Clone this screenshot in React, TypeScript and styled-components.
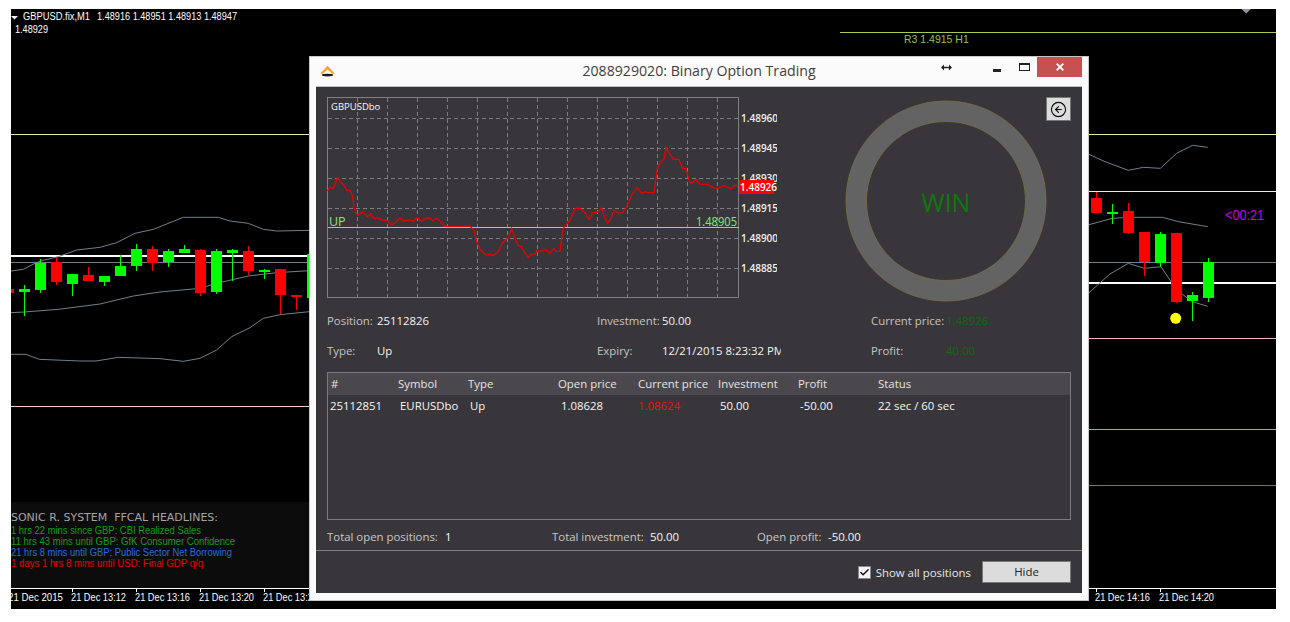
import React from "react";
import styled, { createGlobalStyle } from "styled-components";
import { CircleArrowLeft, Check } from "lucide-react";

const Global = createGlobalStyle`
  html, body { margin: 0; padding: 0; background: #fff; }
  * { box-sizing: border-box; }
`;

const UI = `"Open Sans", "Noto Sans", "Liberation Sans", sans-serif`;
const MT = `"Liberation Sans", Arial, sans-serif`;

const Stage = styled.div`
  position: relative;
  width: 1265px;
  height: 600px;
  margin: 9px 0 0 11px;
  background: #000;
  overflow: hidden;
`;
const Backdrop = styled.svg`
  display: block;
  font-family: ${MT};
`;
const Win = styled.section`
  position: absolute;
  left: 298px;
  top: 47px;
  width: 780px;
  height: 545px;
  display: flex;
  flex-direction: column;
  padding: 0 6px 7px;
  background: #fbfbfb;
  border: 1px solid #c6c6c6;
  font-family: ${UI};
`;
const TitleBar = styled.header`
  flex: none;
  height: 29px;
  display: grid;
  grid-template-columns: 1fr auto 1fr;
`;
const AppIcon = styled.svg`
  margin: 7px 0 0 3px;
`;
const Title = styled.h1`
  margin: 0;
  font-size: 14.15px;
  font-weight: 400;
  line-height: 27px;
  color: #3e3e3e;
  white-space: nowrap;
`;
const Controls = styled.div`
  display: flex;
  justify-content: flex-end;
  align-items: flex-start;
`;
const ResizeGlyph = styled.svg`
  margin: 7px 41px 0 0;
`;
const MinGlyph = styled.span`
  width: 8px;
  height: 3px;
  margin: 12px 18px 0 0;
  background: #222;
`;
const MaxGlyph = styled.span`
  width: 11px;
  height: 8px;
  margin: 6px 7px 0 0;
  border: 1px solid #222;
  border-top-width: 2px;
`;
const CloseButton = styled.div`
  width: 45px;
  height: 20px;
  display: flex;
  align-items: center;
  justify-content: center;
  background: #c75050;
`;
const Body = styled.div`
  flex: 1;
  display: flex;
  flex-direction: column;
  background: #38363a;
  border-top: 1px solid #c0c0c0;
`;
const Main = styled.div`
  flex: 1;
  padding: 10px 11px 0;
  display: flex;
  flex-direction: column;
`;
const TopArea = styled.div`
  position: relative;
  flex: none;
  height: 208px;
  display: flex;
`;
const PriceChart = styled.svg`
  display: block;
  flex: none;
  font-family: ${UI};
`;
const Ring = styled.svg`
  flex: none;
  margin: 3px 0 0 68px;
  font-family: ${UI};
`;
const BackButton = styled.button`
  position: absolute;
  top: 0;
  right: 0;
  width: 25px;
  height: 24px;
  padding: 0;
  display: flex;
  align-items: center;
  justify-content: center;
  background: #dcdcdc;
  border: 1px solid #777;
  color: #0a0a14;
`;
const InfoGrid = styled.div`
  flex: none;
  display: grid;
  grid-template-columns: 270px 274px 1fr;
  grid-auto-rows: 30px;
`;
const InfoCell = styled.div`
  display: flex;
  align-items: center;
  font-size: 11.4px;
  white-space: nowrap;
`;
const InfoLabel = styled.span<{ $w: number }>`
  flex: none;
  width: ${(p) => p.$w}px;
  color: #c4c4c4;
`;
const InfoValue = styled.span<{ $c?: string; $clip?: number }>`
  color: ${(p) => p.$c || "#f4f4f4"};
  ${(p) => (p.$clip ? `width:${p.$clip}px;overflow:hidden;` : "")}
`;
const Table = styled.div`
  flex: none;
  height: 148px;
  margin-top: 7px;
  border: 1px solid #7c7c7c;
  font-size: 11.4px;
`;
const HeadRow = styled.div`
  height: 22px;
  display: grid;
  grid-template-columns: 67px 70px 90px 80px 80px 80px 80px 1fr;
  align-items: center;
  padding: 0 0 2px 3px;
  background: #4a484c;
  color: #e4e4e4;
  white-space: nowrap;
`;
const DataRow = styled(HeadRow)`
  background: none;
  color: #f6f6f6;
`;
const Cell = styled.span<{ $dx?: number; $c?: string }>`
  margin-left: ${(p) => p.$dx || 0}px;
  ${(p) => (p.$c ? `color:${p.$c};` : "")}
`;
const Totals = styled.div`
  flex: 1;
  display: grid;
  grid-template-columns: 225px 205px 1fr;
  align-items: center;
  padding-top: 3px;
`;
const TotalCell = styled.div`
  display: flex;
  font-size: 11.4px;
  white-space: nowrap;
`;
const TotalLabel = styled.span<{ $w: number }>`
  width: ${(p) => p.$w}px;
  color: #c8c8c8;
`;
const TotalValue = styled.span`
  color: #f6f6f6;
`;
const Footer = styled.footer`
  flex: none;
  height: 43px;
  display: flex;
  align-items: center;
  justify-content: flex-end;
  padding-right: 11px;
  border-top: 1px solid #808080;
`;
const CheckBox = styled.span`
  width: 13px;
  height: 13px;
  display: flex;
  align-items: center;
  justify-content: center;
  background: #f4f4f4;
  border: 1px solid #888;
  color: #111;
`;
const CheckLabel = styled.span`
  margin: 0 11px 0 5px;
  font-size: 11.4px;
  color: #e8e8e8;
`;
const HideButton = styled.button`
  width: 89px;
  height: 22px;
  padding: 0 0 2px;
  background: #dcdcdc;
  border: 1px solid #777;
  font-family: ${UI};
  font-size: 11.4px;
  color: #222;
`;

type P = [number, number];
// candle: zoomed centre x, wick top, wick bottom, body top, body bottom, rising
type C = [number, number, number, number, number, number];
const leftCandles: C[] = [
  [25, 867, 879, 867, 879, 0], [73, 855, 947, 867, 876, 1], [121, 778, 879, 790, 870, 1],
  [169, 775, 855, 786, 846, 0], [217, 822, 888, 822, 852, 1], [265, 801, 843, 825, 843, 0],
  [313, 828, 858, 828, 846, 1], [361, 765, 828, 798, 828, 1], [409, 732, 813, 747, 798, 1],
  [457, 738, 813, 747, 789, 0], [505, 747, 801, 753, 787, 1], [553, 735, 759, 747, 759, 1],
  [601, 747, 888, 750, 879, 0], [649, 747, 882, 753, 876, 1], [697, 747, 843, 750, 759, 1],
  [745, 738, 825, 753, 813, 0], [793, 807, 837, 810, 816, 1], [841, 807, 942, 807, 885, 0],
  [889, 885, 930, 885, 891, 0], [937, 762, 894, 762, 894, 1],
];
const rightCandles: C[] = [
  [34, 575, 594, 594, 639, 0], [82, 612, 672, 636, 641, 1], [130, 609, 702, 633, 699, 0],
  [178, 696, 828, 696, 786, 0], [226, 696, 801, 702, 789, 1], [274, 699, 909, 699, 906, 0],
  [322, 876, 963, 885, 903, 1], [370, 774, 906, 786, 894, 1],
];
const leftBands: P[][] = [
  [[33,813],[70,808],[105,790],[125,782],[175,770],[230,750],[300,742],[350,728],[405,700],[460,688],[550,652],[655,652],[690,663],[745,670],[790,688],[830,693],[928,691]],
  [[33,938],[73,936],[175,928],[300,912],[400,888],[480,876],[600,865],[650,850],[745,828],[830,818],[928,812]],
  [[33,1063],[78,1063],[118,1078],[240,1083],[288,1083],[355,1072],[480,1076],[550,1084],[600,1075],[650,1050],[695,1010],[750,983],[790,955],[840,944],[928,935]],
];
const rightBands: P[][] = [
  [[12,463],[60,485],[130,511],[175,502],[226,505],[275,460],[322,436],[368,442]],
  [[12,674],[82,655],[130,652],[232,652],[280,665],[368,680]],
  [[12,878],[75,822],[130,790],[178,805],[228,800],[275,870],[322,905],[368,919]],
];
const red: P[] = [
  [52,423],[60,412],[70,416],[82,384],[92,395],[103,408],[112,422],[120,420],[128,440],[132,470],[138,492],[146,495],[158,485],[172,500],[182,492],[192,506],[205,504],[215,510],[230,510],[245,525],[258,516],[270,504],[280,513],[295,510],[310,513],[322,503],[335,514],[350,504],[362,505],[368,514],[380,504],[392,515],[403,529],[480,529],[492,540],[500,575],[510,598],[528,615],[540,613],[550,617],[565,605],[578,578],[595,563],[605,535],[615,565],[625,588],[635,590],[642,605],[655,622],[665,612],[675,612],[682,600],[690,605],[700,600],[710,601],[720,610],[732,595],[738,605],[750,603],[758,540],[765,527],[780,512],[795,475],[812,475],[825,490],[838,508],[848,488],[862,487],[875,474],[885,505],[893,520],[903,505],[912,480],[925,490],[938,487],[950,470],[965,435],[982,413],[995,430],[1005,426],[1015,428],[1032,428],[1042,355],[1050,340],[1063,325],[1068,292],[1075,305],[1090,328],[1107,328],[1117,355],[1128,355],[1138,395],[1145,400],[1158,388],[1170,403],[1190,403],[1205,410],[1220,417],[1240,407],[1265,416],[1272,406],[1285,407],
];
const pts = (a: P[], ox = 0, oy = 0) => a.map(([x, y]) => `${ox + x / 3},${oy + y / 3}`).join(" ");

const Candles = ({ data, ox }: { data: C[]; ox: number }) => (
  <g shapeRendering="crispEdges">
    {data.map(([cx, wt, wb, bt, bb, up], i) => {
      const x = Math.round(ox + cx / 3);
      const f = up ? "#00ff00" : "#ff0000";
      return (
        <g key={i} fill={f}>
          <rect x={x} y={wt / 3} width={1} height={(wb - wt) / 3} />
          <rect x={x - 5} y={bt / 3} width={11} height={Math.max(2, (bb - bt) / 3)} />
        </g>
      );
    })}
  </g>
);

const hLines: [number, number, number, string, number][] = [
  [840, 1276, 32.5, "#a4cc50", 1], [11, 1276, 134.5, "#dcecb4", 1], [840, 1276, 191.5, "#e8f0d0", 1],
  [11, 840, 256, "#ffffff", 2], [11, 1276, 262.5, "#708090", 1], [840, 1276, 283, "#ffffff", 2],
  [840, 1276, 338.5, "#e4b8b8", 1], [11, 840, 406.5, "#f4d0c8", 1], [840, 1276, 429.5, "#c8909c", 1],
  [840, 1276, 485.5, "#a85858", 1],
];
const headlines: [string, string, number, number][] = [
  ["1 hrs 22 mins since GBP: CBI Realized Sales", "#149c1a", 534, 190],
  ["11 hrs 43 mins until GBP: GfK Consumer Confidence", "#149c1a", 545, 224],
  ["21 hrs 8 mins until GBP: Public Sector Net Borrowing", "#2c66e0", 556, 221],
  ["1 days 1 hrs 8 mins until USD: Final GDP q/q", "#e80000", 567, 192],
];
const times: [string, number, number][] = [
  ["21 Dec 2015", 8, 0], ["21 Dec 13:12", 71, 72], ["21 Dec 13:16", 135, 136], ["21 Dec 13:20", 199, 200],
  ["21 Dec 13:24", 263, 264], ["21 Dec 14:16", 1095, 1096], ["21 Dec 14:20", 1159, 1160],
];
const gridX = Array.from({ length: 13 }, (_, i) => 357.5 + i * 30);
const gridY = [118.5, 148.5, 178.5, 208.5, 238.5, 268.5];
const axis = ["1.48960", "1.48945", "1.48930", "1.48915", "1.48900", "1.48885"];

const heads = ["#", "Symbol", "Type", "Open price", "Current price", "Investment", "Profit", "Status"];

export default function App() {
  return (
    <>
      <Global />
      <Stage>
        <Backdrop width={1265} height={600} viewBox="11 9 1265 600">
          {hLines.map(([a, b, y, c, w], i) => (
            <line key={i} x1={a} x2={b} y1={y} y2={y} stroke={c} strokeWidth={w} shapeRendering="crispEdges" />
          ))}
          {leftBands.map((b, i) => (
            <polyline key={i} points={pts(b)} fill="none" stroke="#708090" strokeWidth={1} />
          ))}
          {rightBands.map((b, i) => (
            <polyline key={i} points={pts(b, 1085)} fill="none" stroke="#708090" strokeWidth={1} />
          ))}
          <Candles data={leftCandles} ox={0} />
          <Candles data={rightCandles} ox={1085} />
          <circle cx={1175.7} cy={318.3} r={5.5} fill="#ffff00" />
          <polygon points="1241.5,9 1251,9 1246.2,13.5" fill="#8a96a2" />
          <polygon points="11,16 18,16 14.5,19.5" fill="#fff" />
          <text x={23} y={20} fill="#fff" fontSize={10} textLength={67} lengthAdjust="spacingAndGlyphs">GBPUSD.fix,M1</text>
          <text x={97} y={20} fill="#fff" fontSize={10} textLength={140} lengthAdjust="spacingAndGlyphs">1.48916 1.48951 1.48913 1.48947</text>
          <text x={15} y={33} fill="#fff" fontSize={10} textLength={33} lengthAdjust="spacingAndGlyphs">1.48929</text>
          <text x={904} y={43} fill="#9ac050" fontSize={10.5}>R3 1.4915 H1</text>
          <text x={1225} y={220} fill="#c800ec" fontSize={14} textLength={39} lengthAdjust="spacingAndGlyphs">&lt;00:21</text>
          <rect x={11} y={502} width={298} height={86} fill="#0c0c0c" />
          <text x={11} y={521} fill="#a4a4a4" fontSize={10} fontFamily='"DejaVu Sans", sans-serif' xmlSpace="preserve" textLength={207} lengthAdjust="spacingAndGlyphs">SONIC R. SYSTEM  FFCAL HEADLINES:</text>
          {headlines.map(([t, c, y, w]) => (
            <text key={t} x={11} y={y} fill={c} fontSize={10} textLength={w} lengthAdjust="spacingAndGlyphs">{t}</text>
          ))}
          <line x1={11} x2={1276} y1={588.5} y2={588.5} stroke="#fff" shapeRendering="crispEdges" />
          {times.map(([t, x, tick]) => (
            <g key={t}>
              {tick > 0 && <line x1={tick + 0.5} x2={tick + 0.5} y1={588} y2={592} stroke="#fff" shapeRendering="crispEdges" />}
              <text x={x} y={601} fill="#fff" fontSize={10} textLength={55} lengthAdjust="spacingAndGlyphs">{t}</text>
            </g>
          ))}
        </Backdrop>
        <Win>
          <TitleBar>
            <AppIcon width={17} height={14} viewBox="0 0 16 13">
              <path d="M1 9 L8 1.5 L15 9 L12.5 9 L8 5 L3.5 9 Z" fill="#f5a81c" />
              <ellipse cx={8} cy={10.3} rx={5.6} ry={1.3} fill="#1a1a1a" />
            </AppIcon>
            <Title>2088929020: Binary Option Trading</Title>
            <Controls>
              <ResizeGlyph width={11} height={7} viewBox="0 0 11 7">
                <path d="M0 3.5 L3 0.5 V2.7 H8 V0.5 L11 3.5 L8 6.5 V4.3 H3 V6.5 Z" fill="#222" />
              </ResizeGlyph>
              <MinGlyph />
              <MaxGlyph />
              <CloseButton>
                <svg width={8} height={8} viewBox="0 0 8 8">
                  <path d="M0.7 0.7 L7.3 7.3 M7.3 0.7 L0.7 7.3" stroke="#fff" strokeWidth={1.8} />
                </svg>
              </CloseButton>
            </Controls>
          </TitleBar>
          <Body>
            <Main>
              <TopArea>
                <PriceChart width={450} height={208} viewBox="327 97 450 208">
                  <g stroke="#7e7e7e" strokeDasharray="4 3" shapeRendering="crispEdges">
                    {gridX.map((x) => <line key={x} x1={x} x2={x} y1={98} y2={297} />)}
                    {gridY.map((y) => <line key={y} x1={328} x2={738} y1={y} y2={y} />)}
                  </g>
                  <rect x={327.5} y={97.5} width={411} height={200} fill="none" stroke="#808080" shapeRendering="crispEdges" />
                  <text x={331} y={110} fill="#fafafa" fontSize={9.5}>GBPUSDbo</text>
                  <line x1={328} x2={739} y1={227.5} y2={227.5} stroke="#8ddc8c" shapeRendering="crispEdges" />
                  <polyline points={pts(red, 310, 50)} fill="none" stroke="#ee0000" strokeWidth={1.25} />
                  <text x={329} y={226} fill="#7fe87f" fontSize={12.5}>UP</text>
                  <text x={696} y={226} fill="#7fe87f" fontSize={12.5} textLength={41} lengthAdjust="spacingAndGlyphs">1.48905</text>
                  {axis.map((t, i) => (
                    <text key={t} x={741} y={gridY[i] + 3.5} fill="#f0f0f0" fontSize={10} fontWeight={600}>{t}</text>
                  ))}
                  <rect x={739} y={180} width={35} height={14} fill="#ff0000" />
                  <text x={740} y={191} fill="#fff" fontSize={10} fontWeight={600}>1.48926</text>
                </PriceChart>
                <Ring width={202} height={202} viewBox="0 0 202 202">
                  <path
                    d="M101 1 a100 100 0 1 0 0.01 0 Z M101 21.5 a79.5 79.5 0 1 1 -0.01 0 Z"
                    fill="#636363"
                    stroke="#7c6c42"
                    strokeWidth={0.8}
                  />
                  <text x={101} y={112} textAnchor="middle" fill="#0b7a0b" fontSize={25}>WIN</text>
                </Ring>
                <BackButton aria-label="Back">
                  <CircleArrowLeft size={17} strokeWidth={1.6} />
                </BackButton>
              </TopArea>
              <InfoGrid>
                <InfoCell><InfoLabel $w={50}>Position:</InfoLabel><InfoValue>25112826</InfoValue></InfoCell>
                <InfoCell><InfoLabel $w={65}>Investment:</InfoLabel><InfoValue>50.00</InfoValue></InfoCell>
                <InfoCell><InfoLabel $w={75}>Current price:</InfoLabel><InfoValue $c="#0f6b0f">1.48926</InfoValue></InfoCell>
                <InfoCell><InfoLabel $w={50}>Type:</InfoLabel><InfoValue>Up</InfoValue></InfoCell>
                <InfoCell><InfoLabel $w={65}>Expiry:</InfoLabel><InfoValue $clip={119}>12/21/2015 8:23:32 PM</InfoValue></InfoCell>
                <InfoCell><InfoLabel $w={75}>Profit:</InfoLabel><InfoValue $c="#0f6b0f">40.00</InfoValue></InfoCell>
              </InfoGrid>
              <Table>
                <HeadRow>
                  {heads.map((h) => <span key={h}>{h}</span>)}
                </HeadRow>
                <DataRow>
                  <Cell $dx={-1}>25112851</Cell>
                  <Cell $dx={2}>EURUSDbo</Cell>
                  <Cell $dx={2}>Up</Cell>
                  <Cell $dx={3}>1.08628</Cell>
                  <Cell $c="#f01010">1.08624</Cell>
                  <Cell $dx={2}>50.00</Cell>
                  <Cell $dx={2}>-50.00</Cell>
                  <Cell>22 sec / 60 sec</Cell>
                </DataRow>
              </Table>
              <Totals>
                <TotalCell><TotalLabel $w={118}>Total open positions:</TotalLabel><TotalValue>1</TotalValue></TotalCell>
                <TotalCell><TotalLabel $w={98}>Total investment:</TotalLabel><TotalValue>50.00</TotalValue></TotalCell>
                <TotalCell><TotalLabel $w={71}>Open profit:</TotalLabel><TotalValue>-50.00</TotalValue></TotalCell>
              </Totals>
            </Main>
            <Footer>
              <CheckBox><Check size={11} strokeWidth={3.2} /></CheckBox>
              <CheckLabel>Show all positions</CheckLabel>
              <HideButton>Hide</HideButton>
            </Footer>
          </Body>
        </Win>
      </Stage>
    </>
  );
}
